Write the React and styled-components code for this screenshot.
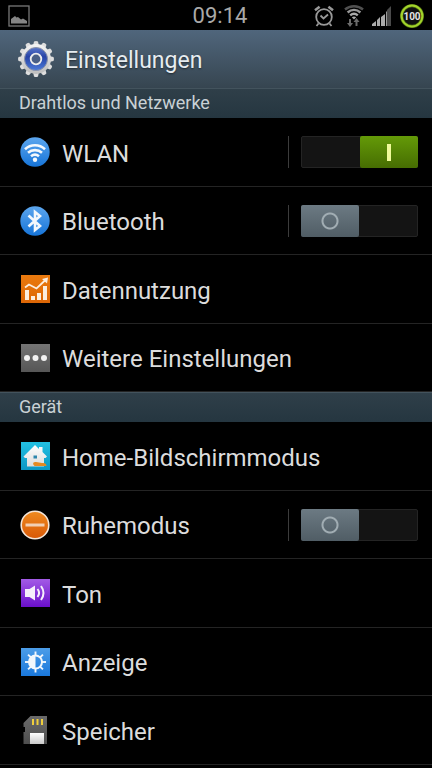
import { useState } from "react";
import styled, { createGlobalStyle } from "styled-components";

const GlobalStyle = createGlobalStyle`
  * {
    box-sizing: border-box;
  }
  body {
    margin: 0;
    background: #000;
    color: #dcdcdc;
    font-family: Roboto, "Noto Sans", sans-serif;
  }
`;

const Page = styled.div`
  min-height: 100vh;
  background: #000;
`;

const StatusBar = styled.div`
  display: grid;
  grid-template-columns: 1fr auto 1fr;
  align-items: center;
  height: 30px;
  padding: 0 8px;
`;

const Clock = styled.time`
  padding-left: 8px;
  color: #a9a9a9;
  font-size: 22px;
  line-height: 32px;
`;

const StatusIcons = styled.div`
  display: flex;
  justify-content: flex-end;
  align-items: center;
  gap: 8px;
`;

const Header = styled.header`
  display: flex;
  align-items: center;
  gap: 10px;
  height: 58px;
  padding: 0 17px;
  background: linear-gradient(#50667c, #364550);
`;

const Title = styled.h1`
  margin: 0;
  padding-top: 3px;
  color: #e6ecf0;
  font-size: 23px;
  font-weight: 400;
  line-height: 32px;
  text-shadow: 0 1px 2px rgba(0, 0, 0, 0.5);
`;

const SectionTitle = styled.h2`
  height: 30px;
  margin: 0;
  padding: 0 19px;
  border-top: 1px solid #43535d;
  background: linear-gradient(#2f3f49, #253640);
  color: #c9d1d5;
  font-size: 18px;
  font-weight: 400;
  line-height: 28px;
`;

const List = styled.ul`
  margin: 0;
  padding: 0;
  list-style: none;
`;

const Item = styled.li`
  display: flex;
  align-items: center;
  height: 68px;
  padding: 0 14px 0 20px;
  border-bottom: 1px solid #242424;

  &:nth-child(odd) {
    height: 69px;
  }
`;

const ItemButton = styled.button`
  display: flex;
  flex: 1;
  align-items: center;
  gap: 12px;
  align-self: stretch;
  padding: 0;
  border: 0;
  background: none;
  color: inherit;
  font: inherit;
  text-align: left;
  cursor: pointer;
`;

const ItemLabel = styled.label`
  display: flex;
  flex: 1;
  align-items: center;
  gap: 12px;
`;

const ItemText = styled.span`
  padding-top: 3px;
  font-size: 24px;
  line-height: 32px;
`;

const SwitchArea = styled.div`
  padding-left: 12px;
  border-left: 1px solid #3c3c3c;
  line-height: 0;
`;

const Switch = styled.input`
  display: flex;
  appearance: none;
  width: 117px;
  height: 32px;
  margin: 0;
  border: 1px solid #242424;
  border-radius: 2px;
  background: #141414;
  cursor: pointer;

  &::before {
    content: "";
    width: 58px;
    height: 32px;
    margin: -1px;
    border-radius: 2px;
    background:
      radial-gradient(circle, transparent 6px, #a1adb3 7px, #a1adb3 8px, transparent 9px),
      linear-gradient(#6c7a83, #505d65);
  }

  &:checked {
    justify-content: flex-end;
  }

  &:checked::before {
    background:
      linear-gradient(#f0fb9a, #f0fb9a) center / 4px 17px no-repeat,
      linear-gradient(#649a08, #466d02);
  }
`;

const PictureIcon = () => (
  <svg width="22" height="22" viewBox="0 0 22 22" aria-hidden="true">
    <rect x="1" y="1" width="20" height="20" fill="none" stroke="#777" strokeWidth="1.3" />
    <path d="M3 18.5v-4.5l4-3 1.500 1.500L10 12l3 2.500 2-1 4 2.500v2.500z" fill="#858585" />
  </svg>
);

const AlarmIcon = () => (
  <svg width="22" height="22" viewBox="0 0 22 22" aria-hidden="true">
    <g fill="none" stroke="#999" strokeWidth="1.8">
      <circle cx="10" cy="12" r="7.8" />
      <path d="M6.5 10.5l3 3 4.5-4M4.5 18.5L2.5 21M15.5 18.5l2 2.5" />
      <path d="M1 5.2l4.6-3.5M19 5.2l-4.6-3.5" strokeWidth="2.6" />
    </g>
  </svg>
);

const WifiStatusIcon = () => (
  <svg width="20" height="22" viewBox="0 0 20 22" aria-hidden="true">
    <g fill="none" strokeWidth="2.4">
      <path d="M1 4.5C6 .2 14 .2 19 4.5" stroke="#505050" />
      <path d="M3.6 7.5c3.8-3.5 9-3.5 12.800 0" stroke="#999" />
      <path d="M6.2 10.3c2.4-2 5.2-2 7.6 0" stroke="#aaa" />
    </g>
    <path d="M7.8 12.2q2.2-1.500 4.4 0L10 14.500z" fill="#aaa" />
    <path d="M5 14h2v4h2l-3 4-3-4h2zM11.500 21v-4h-2l3-4 3 4h-2v4z" fill="#6b6b6b" />
  </svg>
);

const SignalIcon = () => (
  <svg width="20" height="20" viewBox="0 0 20 20" aria-hidden="true">
    <path d="M0 20v-2l4-3v5zM5 20v-6l3-3v9zM9 20v-9l4-3v12z" fill="#aaa" />
    <path d="M14 20V6l1-1v15z" fill="#999" />
    <path d="M15 20V4l4-4v20z" fill="#4a4a4a" />
  </svg>
);

const BatteryIcon = () => (
  <svg width="24" height="24" viewBox="0 0 24 24" role="img" aria-label="Akku 100">
    <circle cx="12" cy="12" r="10.4" fill="#111" stroke="#4f7010" strokeWidth="3.2" />
    <circle cx="12" cy="12" r="10.4" fill="none" stroke="#a3d32c" strokeWidth="2" />
    <text x="12" y="16" fill="#e4e4e4" fontSize="10" fontWeight="700" textAnchor="middle">
      100
    </text>
  </svg>
);

const teeth = [0, 30, 60, 90, 120, 150, 180, 210, 240, 270, 300, 330];

const GearIcon = () => (
  <svg width="38" height="38" viewBox="0 0 38 38" aria-hidden="true">
    <defs>
      <linearGradient id="gearBody" x1="0" y1="0" x2="0" y2="1">
        <stop offset="0" stopColor="#f5f5f5" />
        <stop offset="1" stopColor="#bdbdbd" />
      </linearGradient>
      <linearGradient id="gearBlue" x1="0" y1="0" x2="0" y2="1">
        <stop offset="0" stopColor="#5a78cc" />
        <stop offset="0.4" stopColor="#2743a6" />
        <stop offset="1" stopColor="#4c7ad8" />
      </linearGradient>
    </defs>
    {teeth.map(angle => (
      <path
        key={angle}
        d="M16 6l1-4.500q2-1 4 0L22 6z"
        fill="#dedede"
        transform={`rotate(${angle} 19 19)`}
      />
    ))}
    <circle cx="19" cy="19" r="15" fill="url(#gearBody)" />
    <circle cx="19" cy="19" r="11.500" fill="url(#gearBlue)" stroke="#8b93a8" />
    <circle cx="19" cy="19" r="5.3" fill="#4a5f86" stroke="#eee" strokeWidth="1.800" />
  </svg>
);

const RowIcon = ({ children }) => (
  <svg width="30" height="30" viewBox="0 0 30 30" aria-hidden="true">
    {children}
  </svg>
);

const Gradient = ({ id, from, to }) => (
  <linearGradient id={id} x1="0" y1="0" x2="0" y2="1">
    <stop offset="0" stopColor={from} />
    <stop offset="1" stopColor={to} />
  </linearGradient>
);

const WlanIcon = () => (
  <RowIcon>
    <Gradient id="wlan" from="#5ca6ee" to="#1674d8" />
    <circle cx="15" cy="15" r="14.7" fill="url(#wlan)" />
    <g fill="none" stroke="#f4f8fc" strokeWidth="2.6">
      <path d="M5 12.200c5.600-5.200 14.400-5.200 20 0" />
      <path d="M8 15.800c4-3.600 10-3.600 14 0" />
      <path d="M11 19.2c2.4-2 5.6-2 8 0" />
    </g>
    <circle cx="15" cy="22.8" r="2.2" fill="#f4f8fc" />
  </RowIcon>
);

const BluetoothIcon = () => (
  <RowIcon>
    <Gradient id="bt" from="#5ca6ee" to="#1674d8" />
    <circle cx="15" cy="15" r="14.7" fill="url(#bt)" />
    <path
      d="M8.500 9.500L20 20l-5 4V6l5 4L8.500 20.500"
      fill="none"
      stroke="#f4f8fc"
      strokeWidth="2.6"
    />
  </RowIcon>
);

const DataIcon = () => (
  <RowIcon>
    <Gradient id="data" from="#ea7a0e" to="#dc6606" />
    <rect x="1" y="1" width="29" height="28" fill="url(#data)" />
    <g fill="#fbeee0">
      <path d="M5 16h4v10H5zM11 22h4v4h-4zM17 19h4v7h-4zM23 12h4v14h-4z" />
      <path d="M22 5l6-1.5-1 6z" />
    </g>
    <path d="M5 13.500l4-3 7.500 4L26 5.500" fill="none" stroke="#fbeee0" strokeWidth="1.8" />
  </RowIcon>
);

const MoreIcon = () => (
  <RowIcon>
    <Gradient id="more" from="#747474" to="#565656" />
    <rect x="1" y="1" width="29" height="28" fill="url(#more)" />
    <g fill="#f2f2f2">
      <circle cx="7" cy="15" r="3" />
      <circle cx="15.5" cy="15" r="3" />
      <circle cx="24" cy="15" r="3" />
    </g>
  </RowIcon>
);

const HomeIcon = () => (
  <RowIcon>
    <Gradient id="home" from="#23c0e2" to="#0b96c4" />
    <Gradient id="house" from="#ffffff" to="#dcdcdc" />
    <rect x="1" y="1" width="29" height="28" fill="url(#home)" />
    <path
      d="M15 4l4 4V6h3.500v5L27 15.500 25.500 17H24v8.500H7V17H5l-1.500-1.500z"
      fill="url(#house)"
    />
    <rect x="13.5" y="14.5" width="3.500" height="3" fill="#2e86ad" />
    <path d="M13 23q0-2.500 3-2l6 1q4.500-.5 4.500 3H14.500z" fill="#e58a22" />
  </RowIcon>
);

const QuietIcon = () => (
  <RowIcon>
    <Gradient id="quiet" from="#ee8a20" to="#d95806" />
    <circle cx="15" cy="15" r="13.8" fill="url(#quiet)" stroke="#f3e6da" strokeWidth="1.6" />
    <rect x="5.5" y="13.5" width="19" height="3" fill="#f1cfb4" />
  </RowIcon>
);

const SoundIcon = () => (
  <RowIcon>
    <Gradient id="sound" from="#a35be6" to="#6a0fca" />
    <rect x="1" y="1" width="29" height="28" fill="url(#sound)" />
    <path d="M5 11h4.500L15 7.500v15L9.500 19H5z" fill="#f6f0fb" />
    <g fill="none" stroke="#f6f0fb" strokeWidth="2">
      <path d="M17.500 11q3.200 4 0 8" />
      <path d="M21 8q5 7 0 14" />
    </g>
  </RowIcon>
);

const DisplayIcon = () => (
  <RowIcon>
    <Gradient id="display" from="#4c9de8" to="#1a78dc" />
    <rect x="1" y="1" width="29" height="28" fill="url(#display)" />
    <g stroke="#f2f7fc" strokeWidth="1.9">
      {[0, 45, 90, 135, 180, 225, 270, 315].map(angle => (
        <path key={angle} d="M15.500 4.500v4" transform={`rotate(${angle} 15.5 15)`} />
      ))}
      <circle cx="15.5" cy="15" r="6.5" fill="none" strokeWidth="2" />
    </g>
    <path d="M15.500 8.500a6.500 6.500 0 0 0 0 13z" fill="#f2f7fc" />
  </RowIcon>
);

const StorageIcon = () => (
  <RowIcon>
    <Gradient id="card" from="#6a6a6a" to="#4e4e4e" />
    <Gradient id="paper" from="#ffffff" to="#c9c9c9" />
    <path d="M10.500 1H27v28H3.500V17H5v-5H3.500V8z" fill="url(#card)" />
    <path d="M12 4h2v6h-2zM16.500 4h2v6h-2zM21 4h2v6h-2z" fill="#f0cf3c" />
    <rect x="10" y="18" width="14" height="11" fill="url(#paper)" />
  </RowIcon>
);

const sections = [
  {
    title: "Drahtlos und Netzwerke",
    items: [
      { id: "wlan-switch", text: "WLAN", Icon: WlanIcon, toggle: true },
      { id: "bluetooth-switch", text: "Bluetooth", Icon: BluetoothIcon, toggle: true },
      { id: "data-usage", text: "Datennutzung", Icon: DataIcon },
      { id: "more-settings", text: "Weitere Einstellungen", Icon: MoreIcon },
    ],
  },
  {
    title: "Gerät",
    items: [
      { id: "home-mode", text: "Home-Bildschirmmodus", Icon: HomeIcon },
      { id: "quiet-switch", text: "Ruhemodus", Icon: QuietIcon, toggle: true },
      { id: "sound-settings", text: "Ton", Icon: SoundIcon },
      { id: "display-settings", text: "Anzeige", Icon: DisplayIcon },
      { id: "storage", text: "Speicher", Icon: StorageIcon },
    ],
  },
];

const SettingsItem = ({ item, checked, onToggle }) => {
  const { id, text, Icon, toggle } = item;
  if (!toggle) {
    return (
      <Item>
        <ItemButton type="button">
          <Icon />
          <ItemText>{text}</ItemText>
        </ItemButton>
      </Item>
    );
  }
  return (
    <Item>
      <ItemLabel htmlFor={id}>
        <Icon />
        <ItemText>{text}</ItemText>
      </ItemLabel>
      <SwitchArea>
        <Switch
          id={id}
          type="checkbox"
          role="switch"
          checked={checked}
          onChange={() => onToggle(id)}
        />
      </SwitchArea>
    </Item>
  );
};

const App = () => {
  const [enabled, setEnabled] = useState({ "wlan-switch": true });

  const handleToggle = id => {
    setEnabled(prev => ({ ...prev, [id]: !prev[id] }));
  };

  return (
    <Page>
      <GlobalStyle />
      <StatusBar>
        <PictureIcon />
        <Clock>09:14</Clock>
        <StatusIcons>
          <AlarmIcon />
          <WifiStatusIcon />
          <SignalIcon />
          <BatteryIcon />
        </StatusIcons>
      </StatusBar>
      <Header>
        <GearIcon />
        <Title>Einstellungen</Title>
      </Header>
      <main>
        {sections.map(section => (
          <section key={section.title}>
            <SectionTitle>{section.title}</SectionTitle>
            <List>
              {section.items.map(item => (
                <SettingsItem
                  key={item.id}
                  item={item}
                  checked={Boolean(enabled[item.id])}
                  onToggle={handleToggle}
                />
              ))}
            </List>
          </section>
        ))}
      </main>
    </Page>
  );
};

export default App;
